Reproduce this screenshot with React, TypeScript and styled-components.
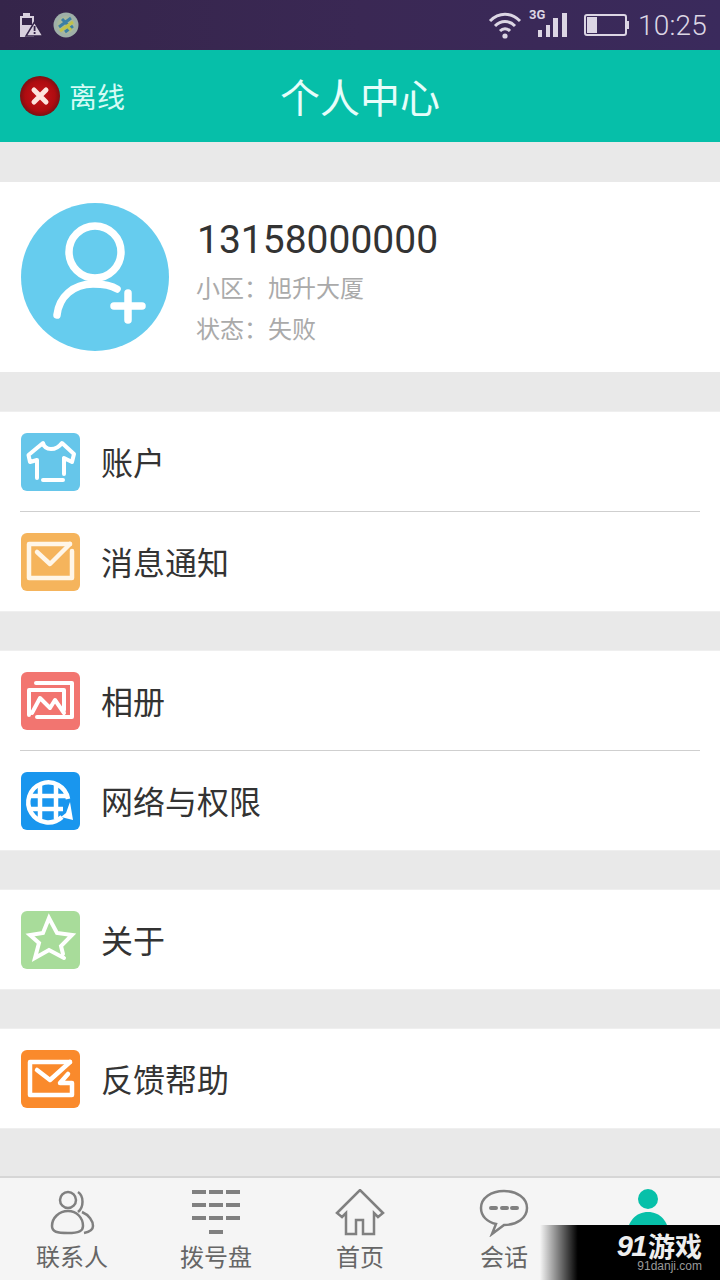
import React from "react";
import styled, { createGlobalStyle } from "styled-components";

const sansStack = `"Noto Sans CJK SC", "Noto Sans", sans-serif`;
const numberStack = `Roboto, "Noto Sans CJK SC", sans-serif`;

const GlobalStyle = createGlobalStyle`
  html, body {
    margin: 0;
    padding: 0;
    background: #e9e9e9;
  }
  * {
    box-sizing: border-box;
  }
`;

const Page = styled.div`
  position: relative;
  display: flex;
  flex-direction: column;
  width: 720px;
  height: 1280px;
  overflow: hidden;
  background: #e9e9e9;
  font-family: ${sansStack};
`;

const StatusBar = styled.div`
  display: flex;
  align-items: center;
  justify-content: space-between;
  flex: 0 0 50px;
  padding: 0 13px 0 19px;
  background: linear-gradient(90deg, #35254a 0%, #3a2854 50%, #3a2a5c 100%);
`;

const StatusGroup = styled.div<{ $gap: number }>`
  display: flex;
  align-items: center;
  gap: ${({ $gap }) => $gap}px;
`;

const Clock = styled.span`
  font-family: ${numberStack};
  font-size: 28px;
  font-weight: 300;
  color: #dcd6e4;
  letter-spacing: 0.2px;
`;

const Header = styled.header`
  display: flex;
  align-items: center;
  justify-content: center;
  position: relative;
  flex: 0 0 92px;
  background: #06bfa9;
`;

const OfflineBadge = styled.div`
  position: absolute;
  left: 20px;
  top: 26px;
  display: flex;
  align-items: center;
  gap: 9px;
  font-size: 28px;
  line-height: 40px;
  color: #d5fbf5;
`;

const Title = styled.h1`
  margin: 0;
  font-size: 40px;
  font-weight: 400;
  line-height: 92px;
  color: #e6fdfa;
`;

const Profile = styled.section`
  display: flex;
  align-items: center;
  gap: 28px;
  height: 190px;
  margin-top: 40px;
  padding: 0 21px;
  background: #fff;
`;

const ProfileInfo = styled.div`
  display: flex;
  flex-direction: column;
  padding-top: 7px;
`;

const Phone = styled.div`
  font-family: ${numberStack};
  font-size: 39px;
  line-height: 46px;
  color: #333;
`;

const InfoLine = styled.div`
  margin: 7px 0 0 -1px;
  font-size: 24px;
  line-height: 34px;
  color: #aaa;
`;

const Group = styled.section`
  margin-top: 40px;
  background: #fff;
  box-shadow: 0 0 0 1px #efefef;
`;

const Row = styled.div`
  display: flex;
  align-items: center;
  gap: 21px;
  height: 99px;
  padding: 0 21px;
`;

const Divider = styled.div`
  height: 1px;
  margin: 0 20px;
  background: #cfcfcf;
`;

const Tile = styled.div<{ $bg: string }>`
  display: flex;
  flex: 0 0 59px;
  width: 59px;
  height: 58px;
  border-radius: 6px;
  background: ${({ $bg }) => $bg};
`;

const RowLabel = styled.span`
  padding-bottom: 1px;
  font-size: 32px;
  line-height: 44px;
  color: #333;
`;

const TabBar = styled.nav`
  position: absolute;
  left: 0;
  right: 0;
  bottom: 0;
  display: grid;
  grid-template-columns: repeat(5, 1fr);
  height: 104px;
  border-top: 2px solid #d6d6d6;
  background: #f5f5f5;
`;

const Tab = styled.div`
  display: flex;
  flex-direction: column;
  align-items: center;
  padding-top: 11px;
`;

const TabIcon = styled.svg`
  display: block;
  width: 60px;
  height: 48px;
`;

const TabLabel = styled.span`
  margin-top: 2px;
  font-size: 24px;
  line-height: 34px;
  color: #666;
`;

const Watermark = styled.div`
  position: absolute;
  right: 0;
  bottom: 0;
  display: flex;
  flex-direction: column;
  align-items: flex-end;
  width: 180px;
  height: 55px;
  padding: 9px 18px 0 0;
  background: linear-gradient(90deg, rgba(0, 0, 0, 0) 0%, #000 21%);
`;

const WatermarkLogo = styled.div`
  display: flex;
  align-items: center;
  gap: 2px;
  height: 24px;
  font-size: 27px;
  line-height: 24px;
  font-weight: 700;
  color: #eee;
`;

const WatermarkBrand = styled.span`
  font-family: "Liberation Sans", sans-serif;
  font-size: 29px;
  font-style: italic;
  letter-spacing: -1.5px;
`;

const WatermarkUrl = styled.div`
  font-family: "Liberation Sans", sans-serif;
  font-size: 12px;
  line-height: 16px;
  color: #9a9a9a;
`;

const line = { fill: "none", stroke: "#fff", strokeWidth: 4, strokeLinecap: "round", strokeLinejoin: "round" } as const;

const ShirtIcon = () => (
  <svg width="59" height="58" viewBox="0 0 59 58">
    <path {...line} d="M16 45V27l-7 2-1.5-7L22 10c2 8 13 8 19 0l12 11-2 8-8-4v16M42 47H22" />
  </svg>
);

const MailIcon = () => (
  <svg width="59" height="58" viewBox="0 0 59 58">
    <path {...line} stroke="#fff6e8" strokeWidth={4.5} d="M49 11H8v34h43V18" />
    <path {...line} stroke="#fff6e8" strokeWidth={4.5} d="M16 19l13 12 20-20" />
  </svg>
);

const AlbumIcon = () => (
  <svg width="59" height="58" viewBox="0 0 59 58">
    <path {...line} d="M15 11H51V45H16" />
    <path {...line} d="M43 38V18H8V43" />
    <path {...line} d="M11 41L19 26l10 10 5-8 9 13" />
  </svg>
);

const GlobeIcon = () => (
  <svg width="59" height="58" viewBox="0 0 59 58">
    <path {...line} strokeLinecap="butt" strokeWidth={4.5} d="M41 45A20 20 0 1 1 47 27" />
    <path {...line} strokeLinecap="butt" strokeWidth={4.5} d="M19 12V47M35 11V47M9 24H47M9 37H42" />
    <path fill="#fff" d="M49 30l3 18-12-3 5-4z" />
  </svg>
);

const StarIcon = () => (
  <svg width="59" height="58" viewBox="0 0 59 58">
    <path {...line} strokeLinejoin="miter" d="M43 47L28 39 14 47l4-15L9 24l13-2 6-15 8 15 15 2-11 11 2 8" />
  </svg>
);

const FeedbackIcon = () => (
  <svg width="59" height="58" viewBox="0 0 59 58">
    <path {...line} strokeWidth={4.5} d="M49 12H9v33h42V33H39l8-9" />
    <path {...line} strokeWidth={4.5} d="M16 20l13 10 20-18" />
  </svg>
);

const BatteryAlert = () => (
  <svg width="24" height="25" viewBox="0 0 24 25">
    <path fill="#d8d0de" d="M4 0h7v3h4v21H1V3h3z" />
    <path fill="#35254a" d="M3 5h10v7H3z" />
    <path fill="#d8d0de" stroke="#35254a" strokeWidth="1.5" d="M15.5 9L24 23H7z" />
    <path fill="#35254a" d="M14.7 13h1.8v5h-1.8zM14.7 19h1.8v2h-1.8z" />
  </svg>
);

const AppBadge = () => (
  <svg width="26" height="26" viewBox="0 0 26 26">
    <circle cx="13" cy="13" r="12.5" fill="#9fb0a8" />
    <circle cx="13" cy="13" r="9" fill="#a8b89c" />
    <path fill="none" stroke="#3c7fa5" strokeWidth="3" d="M6 15l12-9M9 7l6 6M12 20l8-6" />
    <path fill="none" stroke="#c2c24a" strokeWidth="3" d="M7 19l13-9M13 13l5 5" />
  </svg>
);

const WifiIcon = () => (
  <svg width="34" height="28" viewBox="0 0 34 28">
    <g fill="none" stroke="#dcd6e4" strokeWidth="3">
      <path d="M2 10c9-9 21-9 30 0" />
      <path d="M7 15c6-6 14-6 20 0" />
      <path d="M12 20c3-3 7-3 10 0" />
    </g>
    <circle cx="17" cy="25" r="2.6" fill="#dcd6e4" />
  </svg>
);

const SignalIcon = () => (
  <svg width="48" height="40" viewBox="0 0 48 40">
    <text x="0" y="14" fontFamily={numberStack} fontSize="13" fontWeight="700" fill="#dcd6e4">
      3G
    </text>
    <path fill="#dcd6e4" d="M9 25h4v7H9zM17 20h4v12h-4zM24 13h5v19h-5zM33 8h5v24h-5z" />
  </svg>
);

const BatteryIcon = () => (
  <svg width="47" height="22" viewBox="0 0 47 22">
    <rect x="1" y="1" width="41" height="20" rx="2" fill="none" stroke="#dcd6e4" strokeWidth="2" />
    <rect x="3" y="3" width="10" height="16" fill="#dcd6e4" />
    <rect x="43" y="7" width="2" height="8" fill="#dcd6e4" />
  </svg>
);

const OfflineIcon = () => (
  <svg width="40" height="40" viewBox="0 0 40 40">
    <defs>
      <radialGradient id="offlineFill">
        <stop offset="0%" stopColor="#c8141a" />
        <stop offset="75%" stopColor="#ae0c10" />
        <stop offset="100%" stopColor="#7c1012" />
      </radialGradient>
    </defs>
    <circle cx="20" cy="20" r="20" fill="url(#offlineFill)" />
    <path d="M14 14l12 12M26 14L14 26" stroke="#fde4de" strokeWidth="5" strokeLinecap="round" />
  </svg>
);

const Avatar = () => (
  <svg width="148" height="148" viewBox="0 0 148 148">
    <circle cx="74" cy="74" r="74" fill="#66ccee" />
    <g fill="none" stroke="#fff" strokeLinecap="round">
      <circle cx="74" cy="49" r="26" strokeWidth="7.5" />
      <path strokeWidth="7.5" d="M36 112c2-18 16-31 36-31 9 0 18 1 24 5" />
      <path strokeWidth="7.5" d="M107 90v27M93 103h28" />
    </g>
  </svg>
);

const tabStroke = { fill: "none", stroke: "#808080", strokeWidth: 2.5 };

const menuGroups = [
  [
    { label: "账户", bg: "#66c6ea", icon: <ShirtIcon /> },
    { label: "消息通知", bg: "#f5b45c", icon: <MailIcon /> },
  ],
  [
    { label: "相册", bg: "#f27570", icon: <AlbumIcon /> },
    { label: "网络与权限", bg: "#1996ee", icon: <GlobeIcon /> },
  ],
  [{ label: "关于", bg: "#a8dc9a", icon: <StarIcon /> }],
  [{ label: "反馈帮助", bg: "#fa8a2c", icon: <FeedbackIcon /> }],
];

const tabs = [
  {
    key: "contacts",
    label: "联系人",
    icon: (
      <>
        <circle {...tabStroke} cx="26" cy="11" r="8" />
        <path {...tabStroke} d="M36 3c6 4 6 15 0 20" />
        <path {...tabStroke} d="M26 22c-9 0-16 7-16 15 0 6 5 7 16 7s15-2 15-7c0-8-6-15-15-15z" />
        <path {...tabStroke} d="M40 23c7 3 11 9 11 14 0 4-4 6-9 7" />
      </>
    ),
  },
  {
    key: "dialpad",
    label: "拨号盘",
    icon: (
      <path
        fill="#808080"
        d="M6 1h14v4H6zM23 1h14v4H23zM40 1h14v4H40zM6 14h14v4H6zM23 14h14v4H23zM40 14h14v4H40zM6 27h14v4H6zM23 27h14v4H23zM40 27h14v4H40zM23 41h14v4H23z"
      />
    ),
  },
  {
    key: "home",
    label: "首页",
    icon: <path {...tabStroke} d="M7 24L30 1l23 23-5 4-4-4v21H33V31h-7v14H16V24l-4 4z" />,
  },
  {
    key: "chat",
    label: "会话",
    icon: (
      <>
        <path {...tabStroke} d="M30 2c13 0 23 7 23 17s-10 17-23 17l-12 9 4-10C13 33 7 27 7 19 7 9 17 2 30 2z" />
        <path stroke="#808080" strokeWidth="4" strokeLinecap="round" d="M17 19h5M28 19h5M38 19h5" />
      </>
    ),
  },
  {
    key: "profile",
    icon: (
      <>
        <circle cx="30" cy="10" r="10" fill="#07c0a9" />
        <path fill="#07c0a9" d="M9 48c0-16 9-25 21-25s21 9 21 25z" />
      </>
    ),
  },
];

export default function App() {
  return (
    <Page>
      <GlobalStyle />
      <StatusBar>
        <StatusGroup $gap={10}>
          <BatteryAlert />
          <AppBadge />
        </StatusGroup>
        <StatusGroup $gap={7}>
          <WifiIcon />
          <SignalIcon />
          <BatteryIcon />
          <Clock>10:25</Clock>
        </StatusGroup>
      </StatusBar>
      <Header>
        <OfflineBadge>
          <OfflineIcon />
          离线
        </OfflineBadge>
        <Title>个人中心</Title>
      </Header>
      <Profile>
        <Avatar />
        <ProfileInfo>
          <Phone>13158000000</Phone>
          <InfoLine>小区：旭升大厦</InfoLine>
          <InfoLine>状态：失败</InfoLine>
        </ProfileInfo>
      </Profile>
      {menuGroups.map((rows, groupIndex) => (
        <Group key={groupIndex}>
          {rows.map((row, rowIndex) => (
            <React.Fragment key={row.label}>
              {rowIndex > 0 && <Divider />}
              <Row>
                <Tile $bg={row.bg}>{row.icon}</Tile>
                <RowLabel>{row.label}</RowLabel>
              </Row>
            </React.Fragment>
          ))}
        </Group>
      ))}
      <TabBar>
        {tabs.map((tab) => (
          <Tab key={tab.key}>
            <TabIcon viewBox="0 0 60 48">{tab.icon}</TabIcon>
            {tab.label && <TabLabel>{tab.label}</TabLabel>}
          </Tab>
        ))}
      </TabBar>
      <Watermark>
        <WatermarkLogo>
          <WatermarkBrand>91</WatermarkBrand>
          <span>游戏</span>
        </WatermarkLogo>
        <WatermarkUrl>91danji.com</WatermarkUrl>
      </Watermark>
    </Page>
  );
}
